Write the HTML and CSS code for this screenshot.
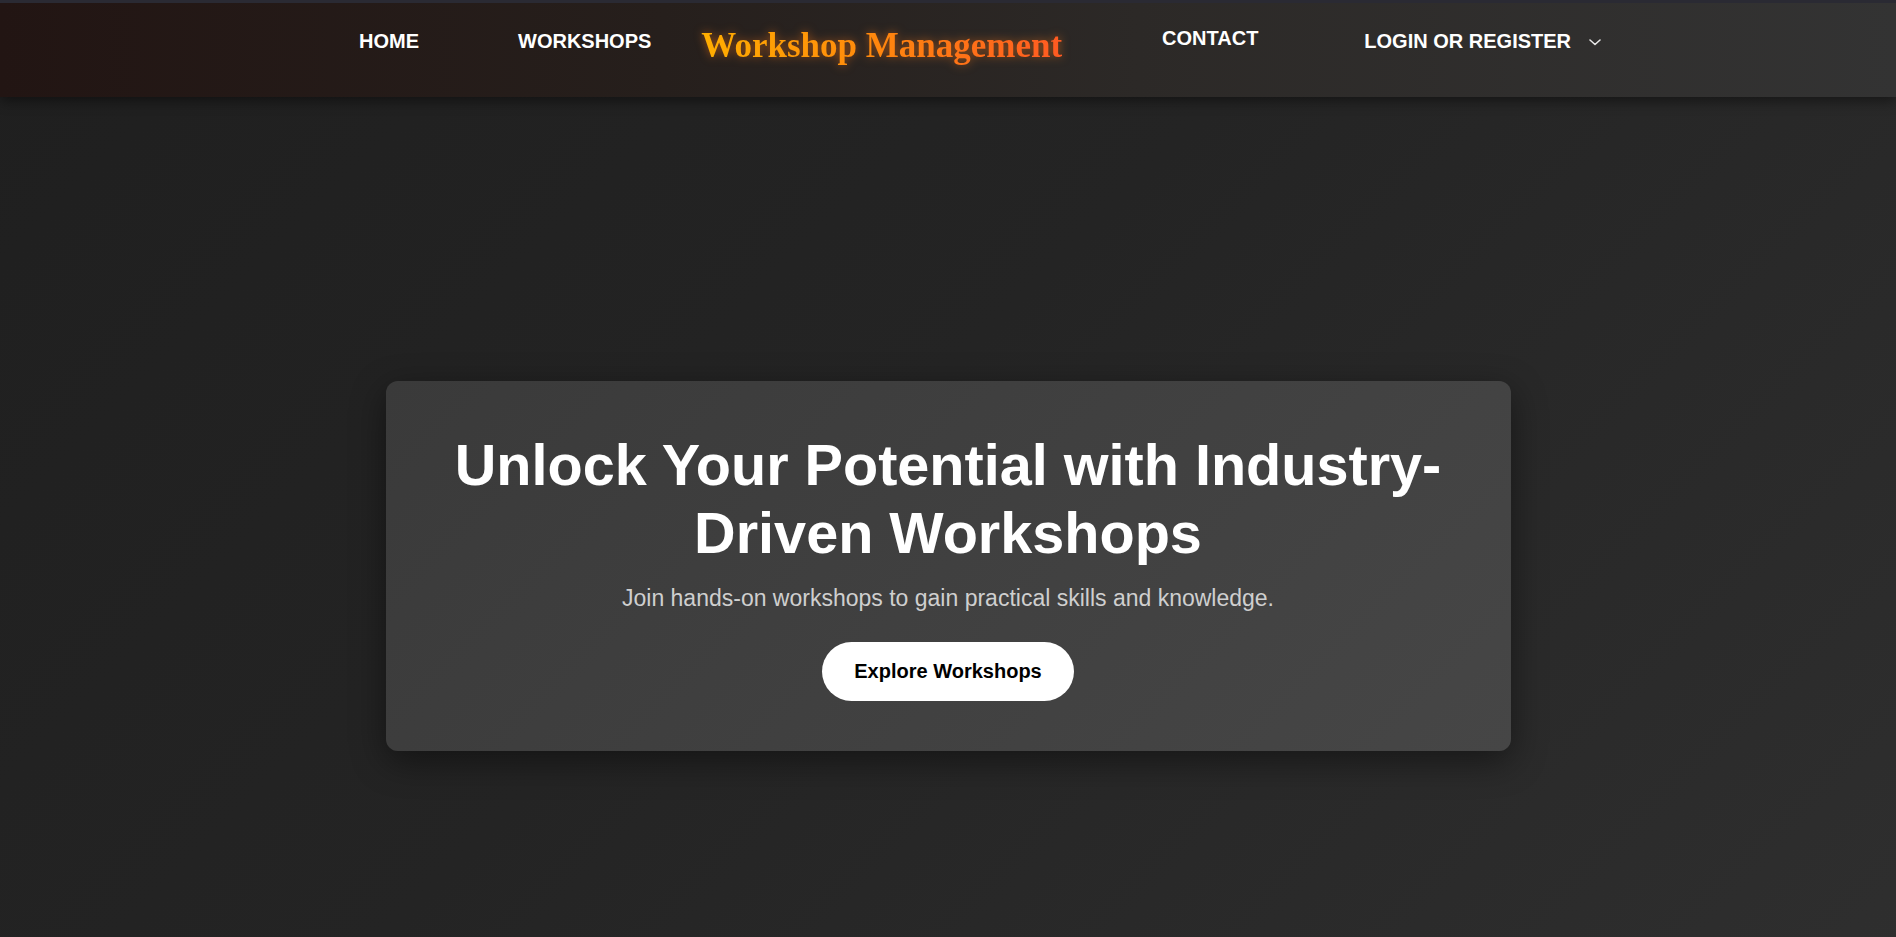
FILE: index.html
```html
<!DOCTYPE html>
<html lang="en">
<head>
<meta charset="utf-8">
<title>Workshop Management</title>
<link rel="stylesheet" href="styles.css">
</head>
<body>
<header class="site-header">
  <nav class="navbar">
    <ul class="nav-list">
      <li class="nav-item nav-item-home"><a class="nav-link" href="#">HOME</a></li>
      <li class="nav-item nav-item-workshops"><a class="nav-link" href="#">WORKSHOPS</a></li>
      <li class="nav-item nav-item-brand"><span class="brand">Workshop Management</span></li>
      <li class="nav-item nav-item-contact"><a class="nav-link" href="#">CONTACT</a></li>
      <li class="nav-item nav-item-login">
        <a class="nav-link dropdown-toggle" href="#">LOGIN OR REGISTER
          <svg class="chevron" width="12" height="7" viewBox="0 0 12 7" aria-hidden="true"><polyline points="1,1 6,5.5 11,1" fill="none" stroke="#e6e6e6" stroke-width="1.6" stroke-linecap="round" stroke-linejoin="round"/></svg>
        </a>
      </li>
    </ul>
  </nav>
</header>
<main>
  <section class="hero">
    <div class="hero-card">
      <h1 class="hero-title">Unlock Your Potential with Industry-Driven Workshops</h1>
      <p class="hero-subtitle">Join hands-on workshops to gain practical skills and knowledge.</p>
      <a class="hero-btn" href="#">Explore Workshops</a>
    </div>
  </section>
</main>
</body>
</html>
```

FILE: styles.css
```css
* {
  box-sizing: border-box;
}

html {
  background: #222;
}

body {
  margin: 0;
  font-family: "Liberation Sans", Arial, sans-serif;
  color: #fff;
  background: linear-gradient(135deg, #1f1f1f 0%, #242424 45%, #2f2f2f 100%);
  min-height: 100vh;
}

.site-header {
  position: relative;
  z-index: 2;
}

.navbar {
  height: 97px;
  border-top: 3px solid #2a2a33;
  background: linear-gradient(90deg, #221513 0%, #261f1c 35%, #2c2927 60%, #333333 100%);
  box-shadow: 0 4px 12px rgba(0, 0, 0, 0.45);
  padding-top: 23px;
}

.nav-list {
  list-style: none;
  margin: 0;
  padding: 0 0 0 359px;
  display: flex;
  align-items: flex-start;
}

.nav-item {
  flex: none;
}

.nav-link {
  color: #fff;
  text-decoration: none;
  font-weight: 700;
  font-size: 20px;
  display: inline-flex;
  align-items: center;
}

.nav-item-home {
  margin-top: 4px;
  margin-right: 99px;
}

.nav-item-workshops {
  margin-top: 4px;
  margin-right: 50px;
}

.nav-item-brand {
  margin-right: 100px;
}

.nav-item-contact {
  margin-top: 1px;
  margin-right: 106px;
}

.nav-item-login {
  margin-top: 4px;
}

.brand {
  display: block;
  font-family: "Liberation Serif", "Times New Roman", serif;
  font-weight: 700;
  font-size: 35px;
  background: linear-gradient(90deg, #ffae00 0%, #ff8a0c 45%, #ff5a22 100%);
  -webkit-background-clip: text;
  background-clip: text;
  color: transparent;
  filter: drop-shadow(0 0 5px rgba(255, 120, 20, 0.55));
}

.chevron {
  margin-left: 18px;
  margin-top: 2px;
}

.hero {
  min-height: 100vh;
  display: flex;
  align-items: center;
  justify-content: center;
}

.hero-card {
  width: 1125px;
  padding: 50px;
  border-radius: 12px;
  background: linear-gradient(135deg, #3a3a3a 0%, #404040 50%, #464646 100%);
  box-shadow: 0 10px 35px rgba(0, 0, 0, 0.45);
  text-align: center;
}

.hero-title {
  margin: 0;
  font-size: 57.6px;
  line-height: 68px;
  font-weight: 700;
  color: #fff;
}

.hero-subtitle {
  margin: 18px 0 0;
  font-size: 23px;
  color: #cfcfcf;
}

.hero-btn {
  display: inline-block;
  margin-top: 30px;
  padding: 18px 32px;
  border-radius: 30px;
  background: #fff;
  color: #000;
  font-weight: 700;
  font-size: 20px;
  text-decoration: none;
}
```
